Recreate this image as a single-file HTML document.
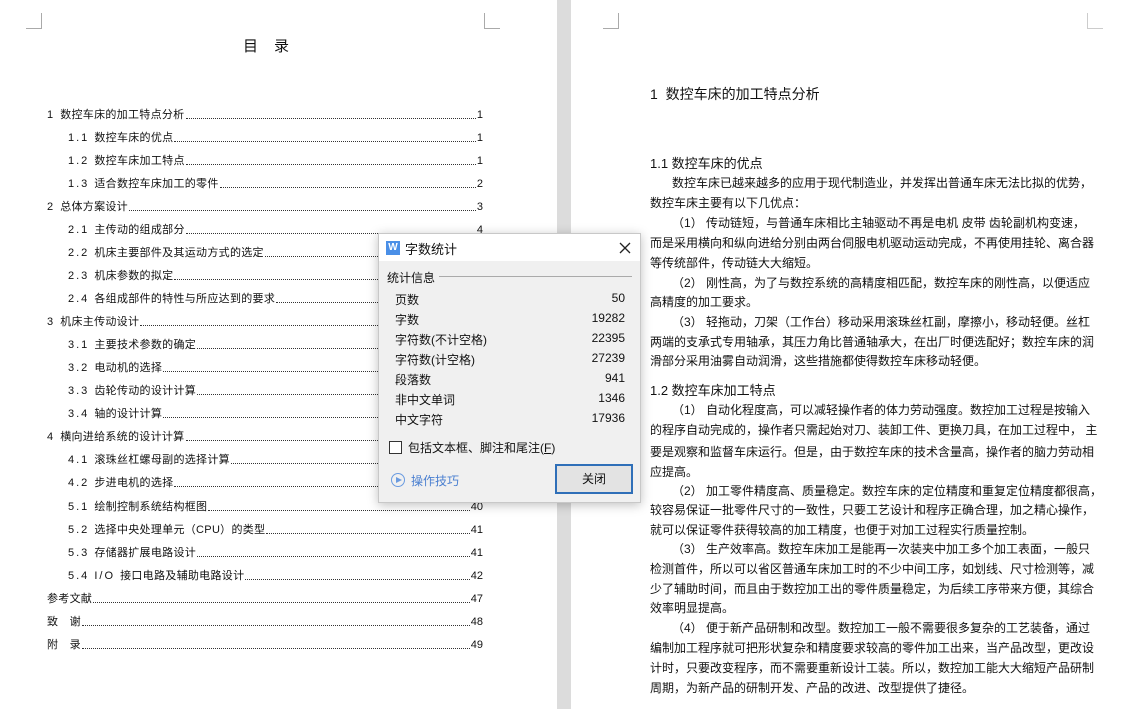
<!DOCTYPE html>
<html><head><meta charset="utf-8"><style>
*{margin:0;padding:0;box-sizing:border-box}
body{width:1123px;height:709px;overflow:hidden;background:#fff;position:relative;font-family:"Liberation Sans","Noto Sans CJK SC","WenQuanYi Zen Hei",sans-serif;color:#111}
.gap{position:absolute;left:557px;top:0;width:14px;height:709px;background:#dcdcdc}
.c{position:absolute;border-color:#aaa;border-style:solid;width:16px;height:16px}
.t{position:absolute;font-size:11px;line-height:16px;white-space:nowrap;display:flex;right:640px}
.t .l{white-space:nowrap;letter-spacing:.3px}
.t .n{letter-spacing:2px}
.t .d{flex:1;border-bottom:1px dotted #333;margin:0 1px 4px}
.r{position:absolute;left:650px;width:435px;font-size:12px;line-height:16px;white-space:nowrap;text-align:justify;text-align-last:justify}
.r.i{padding-left:22px}
.r.e{text-align-last:left}
.h{position:absolute;left:650px;font-size:13px;white-space:nowrap}
.dlg{position:absolute;left:378px;top:233px;width:263px;height:270px;background:#f0f0f0;border:1px solid #c8c8c8;box-shadow:0 2px 10px rgba(0,0,0,.25);font-size:12px}
.dlg .tb{height:27px;background:#fff;position:relative}
.row{position:absolute;left:16px;width:230px;display:flex;justify-content:space-between;font-size:12px}
</style></head><body>
<div class="gap"></div>
<div class="c" style="left:26px;top:13px;border-width:0 1px 1px 0"></div>
<div class="c" style="left:484px;top:13px;border-width:0 0 1px 1px"></div>
<div class="c" style="left:603px;top:13px;border-width:0 1px 1px 0"></div>
<div class="c" style="left:1087px;top:13px;border-width:0 0 1px 1px;border-color:#ccc"></div>
<div style="position:absolute;left:243px;top:35px;font-size:15px;letter-spacing:16px">目录</div>

<div class="t" style="left:47px;top:107px"><span class="l"><span class="n">1 </span>数控车床的加工特点分析</span><span class="d"></span><span>1</span></div>
<div class="t" style="left:68px;top:130px"><span class="l"><span class="n">1.1 </span>数控车床的优点</span><span class="d"></span><span>1</span></div>
<div class="t" style="left:68px;top:153px"><span class="l"><span class="n">1.2 </span>数控车床加工特点</span><span class="d"></span><span>1</span></div>
<div class="t" style="left:68px;top:176px"><span class="l"><span class="n">1.3 </span>适合数控车床加工的零件</span><span class="d"></span><span>2</span></div>
<div class="t" style="left:47px;top:199px"><span class="l"><span class="n">2 </span>总体方案设计</span><span class="d"></span><span>3</span></div>
<div class="t" style="left:68px;top:222px"><span class="l"><span class="n">2.1 </span>主传动的组成部分</span><span class="d"></span><span>4</span></div>
<div class="t" style="left:68px;top:245px"><span class="l"><span class="n">2.2 </span>机床主要部件及其运动方式的选定</span><span class="d"></span><span>5</span></div>
<div class="t" style="left:68px;top:268px"><span class="l"><span class="n">2.3 </span>机床参数的拟定</span><span class="d"></span><span>6</span></div>
<div class="t" style="left:68px;top:291px"><span class="l"><span class="n">2.4 </span>各组成部件的特性与所应达到的要求</span><span class="d"></span><span>7</span></div>
<div class="t" style="left:47px;top:314px"><span class="l"><span class="n">3 </span>机床主传动设计</span><span class="d"></span><span>9</span></div>
<div class="t" style="left:68px;top:337px"><span class="l"><span class="n">3.1 </span>主要技术参数的确定</span><span class="d"></span><span>9</span></div>
<div class="t" style="left:68px;top:360px"><span class="l"><span class="n">3.2 </span>电动机的选择</span><span class="d"></span><span>10</span></div>
<div class="t" style="left:68px;top:383px"><span class="l"><span class="n">3.3 </span>齿轮传动的设计计算</span><span class="d"></span><span>12</span></div>
<div class="t" style="left:68px;top:406px"><span class="l"><span class="n">3.4 </span>轴的设计计算</span><span class="d"></span><span>18</span></div>
<div class="t" style="left:47px;top:429px"><span class="l"><span class="n">4 </span>横向进给系统的设计计算</span><span class="d"></span><span>25</span></div>
<div class="t" style="left:68px;top:452px"><span class="l"><span class="n">4.1 </span>滚珠丝杠螺母副的选择计算</span><span class="d"></span><span>26</span></div>
<div class="t" style="left:68px;top:475px"><span class="l"><span class="n">4.2 </span>步进电机的选择</span><span class="d"></span><span>33</span></div>
<div class="t" style="left:68px;top:499px"><span class="l"><span class="n">5.1 </span>绘制控制系统结构框图</span><span class="d"></span><span>40</span></div>
<div class="t" style="left:68px;top:522px"><span class="l"><span class="n">5.2 </span>选择中央处理单元（CPU）的类型</span><span class="d"></span><span>41</span></div>
<div class="t" style="left:68px;top:545px"><span class="l"><span class="n">5.3 </span>存储器扩展电路设计</span><span class="d"></span><span>41</span></div>
<div class="t" style="left:68px;top:568px"><span class="l"><span class="n">5.4 I/O </span>接口电路及辅助电路设计</span><span class="d"></span><span>42</span></div>
<div class="t" style="left:47px;top:591px"><span class="l">参考文献</span><span class="d"></span><span>47</span></div>
<div class="t" style="left:47px;top:614px"><span class="l">致　谢</span><span class="d"></span><span>48</span></div>
<div class="t" style="left:47px;top:637px"><span class="l">附　录</span><span class="d"></span><span>49</span></div>

<div class="h" style="top:84px;font-size:14px">1&nbsp; 数控车床的加工特点分析</div>
<div class="h" style="top:153px">1.1 数控车床的优点</div>
<div class="r i" style="top:175px">数控车床已越来越多的应用于现代制造业，并发挥出普通车床无法比拟的优势，</div>
<div class="r e" style="top:195px">数控车床主要有以下几优点：</div>
<div class="r i" style="top:215px">（1） 传动链短，与普通车床相比主轴驱动不再是电机 皮带 齿轮副机构变速，</div>
<div class="r" style="top:235px">而是采用横向和纵向进给分别由两台伺服电机驱动运动完成，不再使用挂轮、离合器</div>
<div class="r e" style="top:255px">等传统部件，传动链大大缩短。</div>
<div class="r i" style="top:275px">（2） 刚性高，为了与数控系统的高精度相匹配，数控车床的刚性高，以便适应</div>
<div class="r e" style="top:294px">高精度的加工要求。</div>
<div class="r i" style="top:314px">（3） 轻拖动，刀架（工作台）移动采用滚珠丝杠副，摩擦小，移动轻便。丝杠</div>
<div class="r" style="top:334px">两端的支承式专用轴承，其压力角比普通轴承大，在出厂时便选配好；数控车床的润</div>
<div class="r e" style="top:353px">滑部分采用油雾自动润滑，这些措施都使得数控车床移动轻便。</div>
<div class="h" style="top:380px">1.2 数控车床加工特点</div>
<div class="r i" style="top:402px">（1） 自动化程度高，可以减轻操作者的体力劳动强度。数控加工过程是按输入</div>
<div class="r" style="top:422px">的程序自动完成的，操作者只需起始对刀、装卸工件、更换刀具，在加工过程中， 主</div>
<div class="r" style="top:444px">要是观察和监督车床运行。但是，由于数控车床的技术含量高，操作者的脑力劳动相</div>
<div class="r e" style="top:464px">应提高。</div>
<div class="r i" style="top:483px">（2） 加工零件精度高、质量稳定。数控车床的定位精度和重复定位精度都很高，</div>
<div class="r" style="top:502px">较容易保证一批零件尺寸的一致性，只要工艺设计和程序正确合理，加之精心操作，</div>
<div class="r e" style="top:522px">就可以保证零件获得较高的加工精度，也便于对加工过程实行质量控制。</div>
<div class="r i" style="top:541px">（3） 生产效率高。数控车床加工是能再一次装夹中加工多个加工表面，一般只</div>
<div class="r" style="top:561px">检测首件，所以可以省区普通车床加工时的不少中间工序，如划线、尺寸检测等，减</div>
<div class="r" style="top:581px">少了辅助时间，而且由于数控加工出的零件质量稳定，为后续工序带来方便，其综合</div>
<div class="r e" style="top:600px">效率明显提高。</div>
<div class="r i" style="top:620px">（4） 便于新产品研制和改型。数控加工一般不需要很多复杂的工艺装备，通过</div>
<div class="r" style="top:640px">编制加工程序就可把形状复杂和精度要求较高的零件加工出来，当产品改型，更改设</div>
<div class="r" style="top:660px">计时，只要改变程序，而不需要重新设计工装。所以，数控加工能大大缩短产品研制</div>
<div class="r e" style="top:680px">周期，为新产品的研制开发、产品的改进、改型提供了捷径。</div>

<div class="dlg">
 <div class="tb">
  <div style="position:absolute;left:7px;top:7px;width:14px;height:14px;background:#4a8fe7;color:#fff;font-size:10px;line-height:14px;text-align:center;font-weight:bold">W</div>
  <div style="position:absolute;left:26px;top:5px;font-size:13px">字数统计</div>
  <svg style="position:absolute;left:240px;top:8px" width="12" height="12"><path d="M1 1L11 11M11 1L1 11" stroke="#222" stroke-width="1.3"/></svg>
 </div>
 <div style="position:absolute;left:8px;top:35px">统计信息</div>
 <div style="position:absolute;left:60px;top:42px;width:193px;height:1px;background:#aaa"></div>
 <div class="row" style="top:57px"><span>页数</span><span>50</span></div>
 <div class="row" style="top:77px"><span>字数</span><span>19282</span></div>
 <div class="row" style="top:97px"><span>字符数(不计空格)</span><span>22395</span></div>
 <div class="row" style="top:117px"><span>字符数(计空格)</span><span>27239</span></div>
 <div class="row" style="top:137px"><span>段落数</span><span>941</span></div>
 <div class="row" style="top:157px"><span>非中文单词</span><span>1346</span></div>
 <div class="row" style="top:177px"><span>中文字符</span><span>17936</span></div>
 <div style="position:absolute;left:10px;top:207px;width:13px;height:13px;border:1px solid #333;background:#fff"></div>
 <div style="position:absolute;left:29px;top:205px">包括文本框、脚注和尾注(<u>F</u>)</div>
 <div style="position:absolute;left:12px;top:239px;width:14px;height:14px;border:1px solid #6a9be0;border-radius:50%"></div>
 <div style="position:absolute;left:17px;top:243px;width:0;height:0;border-left:6px solid #6a9be0;border-top:3.5px solid transparent;border-bottom:3.5px solid transparent"></div>
 <div style="position:absolute;left:32px;top:238px;color:#4a7fd0">操作技巧</div>
 <div style="position:absolute;left:176px;top:230px;width:78px;height:30px;border:2px solid #2f6fb8;background:#e3e3e3;text-align:center;line-height:26px">关闭</div>
</div>
</body></html>
